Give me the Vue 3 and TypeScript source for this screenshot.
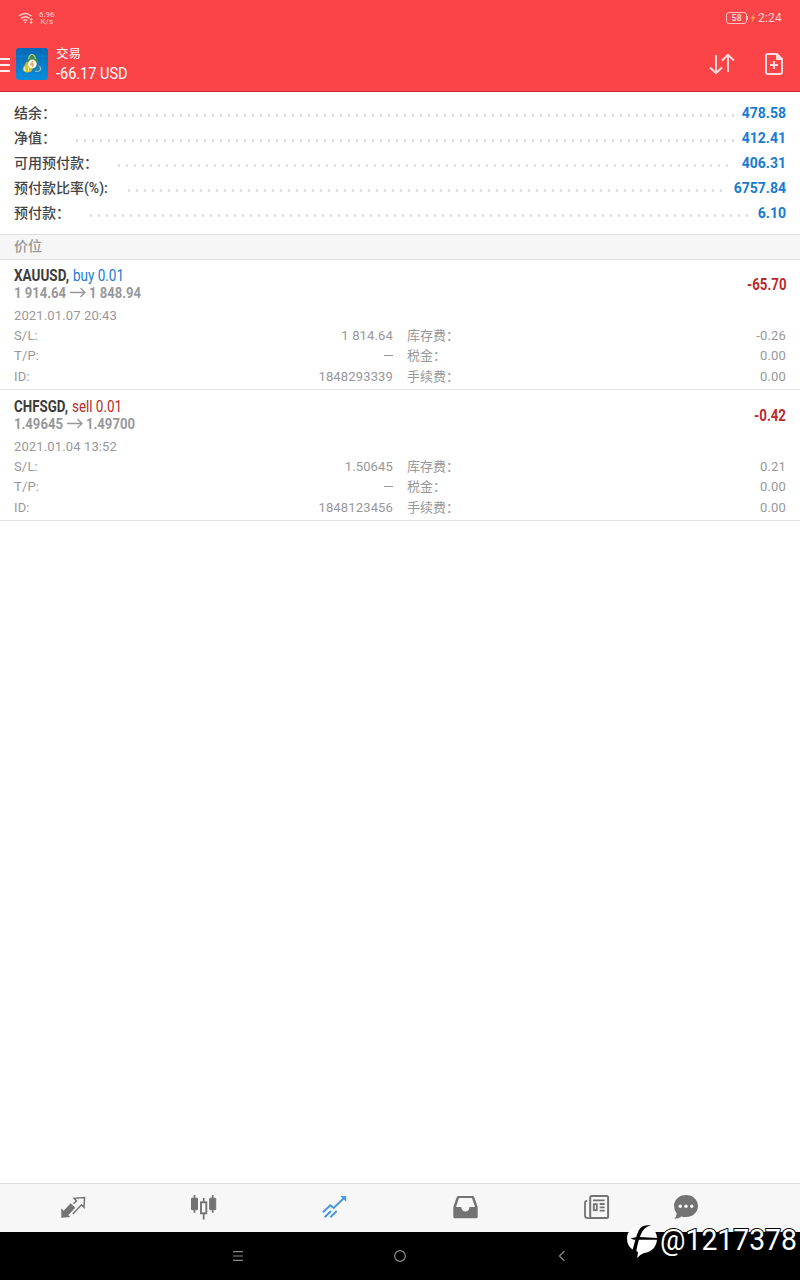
<script setup lang="ts">
interface Summary { label: string; value: string; start: number; dots: number }
interface Order {
  symbol: string; symbolW: number; side: string; sideW: number; action: 'buy' | 'sell'
  from: string; fromW: number; to: string; toW: number; profit: string; profitW: number
  time: string; sl: string; id: string; swap: string
}
const summary: Summary[] = [
  { label: '结余：', value: '478.58', start: 58.5, dots: 83 },
  { label: '净值：', value: '412.41', start: 58.5, dots: 83 },
  { label: '可用预付款：', value: '406.31', start: 100.5, dots: 77 },
  { label: '预付款比率(%):', value: '6757.84', start: 111, dots: 75 },
  { label: '预付款：', value: '6.10', start: 72.5, dots: 83 },
]
const orders: Order[] = [
  { symbol: 'XAUUSD,', symbolW: 55, side: 'buy 0.01', sideW: 51, action: 'buy', from: '1 914.64', fromW: 52, to: '1 848.94', toW: 52, profit: '-65.70', profitW: 39.5, time: '2021.01.07 20:43', sl: '1 814.64', id: '1848293339', swap: '-0.26' },
  { symbol: 'CHFSGD,', symbolW: 54, side: 'sell 0.01', sideW: 50, action: 'sell', from: '1.49645', fromW: 49, to: '1.49700', toW: 49, profit: '-0.42', profitW: 32, time: '2021.01.04 13:52', sl: '1.50645', id: '1848123456', swap: '0.21' },
]
</script>

<template>
  <div class="screen">
    <header class="top">
      <div class="status">
        <svg class="wifi" width="16" height="14" viewBox="0 0 16 14" fill="none" stroke="#ffc9c9" stroke-width="1.4">
          <path d="M1 5Q7 0 13.5 5M3 7.5Q7.2 4 11.5 7.5M5 9.8Q7.2 8 9.3 9.8" />
          <circle cx="7.2" cy="11.3" r=".9" fill="#ffc9c9" stroke="none" />
          <path d="M13.2 7.5v4.8M12 9l1.2-1.5L14.4 9M12 11l1.2 1.5 1.2-1.5" stroke-width="1" />
        </svg>
        <div class="speed"><span>6.96</span><span>K/s</span></div>
        <div class="spacer"></div>
        <div class="battery">58</div>
        <svg class="bolt" width="6" height="12" viewBox="0 0 6 12"><path d="M4.500 .5.5 6.500h2L1.300 11.500 5.500 5H3.500z" fill="#ff9350" /></svg>
        <span class="clock">2:24</span>
      </div>
      <div class="bar">
        <svg class="menu" width="10" height="16" viewBox="0 0 10 16"><path d="M0 2h10M0 8h10M0 14h10" stroke="#ffecec" stroke-width="2.200" /></svg>
        <svg class="logo" width="32" height="32" viewBox="0 0 32 32">
          <defs><linearGradient id="sky" x2="0" y2="1"><stop stop-color="#0868b6" /><stop offset="1" stop-color="#078ddd" /></linearGradient></defs>
          <rect width="32" height="32" rx="3" fill="url(#sky)" />
          <path d="M0 8h32M0 27h32M5 0v32M27 0v32" stroke="#1996db" stroke-width=".6" opacity=".5" />
          <path d="M10 15c0-3 2-4 2.500-6C13.500 5 19 5 20 9c.5 2 2.500 3 2.500 6l-6 2z" fill="#3f8d4c" />
          <path d="M12.500 11q1-4.500 3.500-4.500t3.500 4.500" stroke="#a9d488" stroke-width="1.200" fill="none" />
          <path d="M11.500 14c-2 0-2 2.500-3.500 4-3 4 0 6.500 3.500 6.500 3 0 4.500-1 5-3.500z" fill="#cdbb3b" />
          <path d="M9.500 18.500q-2 3 .5 4.500M12.500 19v4.500" stroke="#f7ef9a" stroke-width="1.200" fill="none" />
          <path d="M21 14c2 0 2 2.500 3.500 4 3 4 .5 6-2.500 6.500-3 .3-5-1-5.500-3.500z" fill="#237fa8" />
          <path d="M23.500 18q2.500 3.500-.5 5l-4 .5" stroke="#7fcbe6" stroke-width="1.200" fill="none" />
          <circle cx="16.300" cy="16" r="4.400" fill="#f7f4e7" />
          <path d="m16.800 13-2 3.700h3m-1-1.700v4" stroke="#d9a06a" stroke-width="1.100" fill="none" />
        </svg>
        <div class="title">
          <span>交易</span>
          <svg width="74" height="20"><text x="0" y="16" textLength="71.500" lengthAdjust="spacingAndGlyphs" class="amount">-66.17 USD</text></svg>
        </div>
        <div class="spacer"></div>
        <svg class="sort" width="26" height="24" viewBox="0 0 26 24" fill="none" stroke="#ffdcdc" stroke-width="1.9">
          <path d="M7 3v18M1 15.5 7 21.2l6-5.7M19 20V2.800M13 8.500l6-5.700 6 5.700" />
        </svg>
        <svg class="doc" width="20" height="24" viewBox="0 0 20 24" fill="none" stroke="#ffdcdc" stroke-width="2">
          <path d="M3.500 2h9.500l5 5v13q0 2-2 2H4q-2 0-2-2V3.500Q2 2 3.500 2z" />
          <path d="M12.500 2v5.500H18z" fill="#ffdcdc" stroke-width="1" />
          <path d="M6 13h8M10 9v8" />
        </svg>
      </div>
    </header>

    <section class="summary">
      <div v-for="s in summary" :key="s.label" class="sum-row">
        <span class="sum-label" :style="{ width: s.start + 'px' }">{{ s.label }}</span>
        <span class="leader" :style="{ width: s.dots * 8 + 'px' }"></span>
        <span class="sum-value">{{ s.value }}</span>
      </div>
    </section>

    <div class="section">价位</div>

    <article v-for="o in orders" :key="o.id" class="order">
      <div class="head">
        <div class="names">
          <div class="line">
            <svg :width="o.symbolW" height="17"><text y="14" :textLength="o.symbolW" lengthAdjust="spacingAndGlyphs" class="symbol">{{ o.symbol }}</text></svg>
            <svg :width="o.sideW" height="17"><text y="14" :textLength="o.sideW" lengthAdjust="spacingAndGlyphs" :class="['side', o.action]">{{ o.side }}</text></svg>
          </div>
          <div class="line">
            <svg :width="o.fromW" height="17"><text y="14" :textLength="o.fromW" lengthAdjust="spacingAndGlyphs" class="price">{{ o.from }}</text></svg>
            <svg width="16" height="17" viewBox="0 0 16 17" fill="none" stroke="#98989a" stroke-width="1.3"><path d="M0 8.500h15M10.500 4l4.500 4.500-4.500 4.500" /></svg>
            <svg :width="o.toW" height="17"><text y="14" :textLength="o.toW" lengthAdjust="spacingAndGlyphs" class="price">{{ o.to }}</text></svg>
          </div>
        </div>
        <svg :width="o.profitW" height="20"><text y="16" :textLength="o.profitW" lengthAdjust="spacingAndGlyphs" class="profit">{{ o.profit }}</text></svg>
      </div>
      <div class="time">{{ o.time }}</div>
      <div class="details">
        <div>S/L:</div><div class="num">{{ o.sl }}</div><div class="fee">库存费：</div><div class="num">{{ o.swap }}</div>
        <div>T/P:</div><div class="num"><i class="dash"></i></div><div class="fee">税金：</div><div class="num">0.00</div>
        <div>ID:</div><div class="num">{{ o.id }}</div><div class="fee">手续费：</div><div class="num">0.00</div>
      </div>
    </article>

    <div class="spacer"></div>

    <nav class="tabs">
      <svg viewBox="0 0 28 28">
        <path d="M2.300 24.700v-9.400l2.400 2.400 7-7.400 4.600 4.400-7 7.300 2 2z" fill="#737373" />
        <path d="m14.500 10.700 3-2.700-2.300-2.700L25.600 4.500 25 14.300l-2.500-2.500-8.700 9.200" fill="none" stroke="#737373" stroke-width="1.500" />
      </svg>
      <svg viewBox="0 0 28 28" fill="#737373" stroke="#737373">
        <rect x="1.500" y="5.200" width="6" height="11.500" rx=".5" /><path d="M4.500 2v17.700M13.700 5v4M13.700 20.500v6M22.700 2v17.700" stroke-width="1.700" />
        <rect x="11" y="9.300" width="5.300" height="11" fill="none" stroke-width="1.900" /><rect x="19.700" y="5.200" width="6" height="11.500" rx=".5" />
      </svg>
      <svg class="third" viewBox="0 0 28 28" fill="none" stroke="#4998e2" stroke-width="2">
        <path d="m3 19.300 7.300-7 3.400 2.700L24.700 4.300M4.700 24.300 11 18M10.300 24.300l6.400-6.300" /><path d="M20.300 3h5.900v5.800z" fill="#4998e2" stroke="none" />
      </svg>
      <svg viewBox="0 0 28 28">
        <path fill="#737373" fill-rule="evenodd" d="M7.500 3h14q1.300 0 1.800 1.200l3.400 9.800v10q0 1.300-1.500 1.300H3.800q-1.500 0-1.500-1.300V14L5.700 4.200Q6.200 3 7.500 3zM8 5 5 14h5.300a4.100 4.500 0 0 0 8.200 0H24L21 5z" />
      </svg>
      <svg viewBox="0 0 28 28" fill="none" stroke="#737373" stroke-width="2">
        <rect x="8.200" y="2.900" width="17.900" height="22.200" rx="1.500" /><path d="M5.300 7.800Q3 7.800 3 10v12.500q0 2.600 3 2.600h4M11 7.300h11.700M17.700 11h5M17.700 14.300h5M17.700 17.600h5" stroke-width="1.800" /><rect x="11.800" y="11.200" width="3" height="6" stroke-width="1.800" />
      </svg>
      <svg class="chat" viewBox="0 0 28 28">
        <path fill="#737373" d="M14 2c6.800 0 12 4.800 12 11s-5.200 11-12 11q-2.500 0-4.500-.6-3 2.400-7.200 2.300Q4.500 24 4.700 20.500 2 17.500 2 13C2 6.800 7.200 2 14 2z" />
        <g fill="#f7f7f7"><circle cx="8.300" cy="13.200" r="1.700" /><circle cx="14" cy="13.200" r="1.700" /><circle cx="19.700" cy="13.200" r="1.700" /></g>
      </svg>
    </nav>

    <footer class="system">
      <svg viewBox="0 0 14 14"><path d="M2 2.700h10M2 7h10M2 11.300h10" /></svg>
      <svg viewBox="0 0 14 14"><circle cx="7" cy="7" r="5.300" /></svg>
      <svg viewBox="0 0 14 14"><path d="M9.500 2 4.500 7l5 5" /></svg>
    </footer>

    <svg class="watermark" width="180" height="46" viewBox="0 0 180 46">
      <path d="M21.500 7C13 7 7 13 7 20.500c0 5 2 8.500 5.500 11L18 34l-.8 6Q20 36.500 24 35c8-1 13-6.500 13-14.500C37 12.500 30.500 7 21.500 7z" fill="#fff" />
      <path d="M31 7.500c-5-.8-9.500 0-12 4.500-3 5.500-4 12-6.500 20l3.500 5c.5-8 2.500-15 5-21 1.700-4.500 5-7.500 10-8.500z" fill="#000" />
      <path d="M10.500 20.500q4-1.800 9-1.600L37 20v1.700H14z" fill="#000" />
      <text x="40" y="32" textLength="137" lengthAdjust="spacingAndGlyphs">@1217378</text>
    </svg>
  </div>
</template>

<style>
body { margin: 0; background: #fff; }
</style>

<style scoped>
.screen { position: relative; display: flex; flex-direction: column; width: 800px; height: 1280px; overflow: hidden; background: #fff; font-family: Roboto, "Noto Sans CJK SC", sans-serif; }
svg { display: block; flex: none; overflow: visible; }
.spacer { flex: 1; }
.top { box-sizing: border-box; height: 92px; background: #fa4447; border-bottom: 1px solid #c02c2f; }
.status { display: flex; align-items: center; height: 36px; padding: 0 18px; color: #ffd0d0; }
.speed { display: flex; flex-direction: column; align-items: center; margin-left: 5px; font-size: 8px; line-height: 7.500px; }
.battery { box-sizing: border-box; position: relative; width: 21px; height: 12px; border: 1px solid #ffc1c1; border-radius: 3px; font-size: 9px; font-weight: 700; line-height: 10px; text-align: center; }
.battery::after { content: ""; position: absolute; right: -2px; top: 3px; width: 1px; height: 4px; background: #ffc1c1; }
.bolt { margin: 0 2px 0 3px; }
.clock { font-size: 12px; letter-spacing: .2px; }
.bar { display: flex; align-items: center; height: 56px; padding-right: 16px; }
.menu { margin: 1px 6px 0 0; }
.title { display: flex; flex-direction: column; margin-left: 8px; color: #fff; font-size: 12.500px; line-height: 18px; }
.amount { font-size: 16px; fill: #fff; }
.sort { margin-right: 29px; }
.summary { box-sizing: border-box; height: 142px; padding: 9px 14px 0; }
.sum-row { display: flex; height: 25px; font-size: 14px; font-weight: 500; color: #444; line-height: 24px; white-space: nowrap; }
.leader { height: 25px; background: radial-gradient(circle at 4px 14.500px, #e0e0e0 0 1.100px, transparent 1.700px) 0 0 / 8px 25px repeat-x; }
.sum-value { margin-left: auto; color: #187bd1; font-size: 14px; font-weight: 700; line-height: 24px; }
.section { box-sizing: border-box; height: 26px; padding-left: 14px; border: solid #dfdfdf; border-width: 1px 0; background: #f6f6f6; color: #98989a; font-size: 14px; font-weight: 500; line-height: 22px; }
.order { box-sizing: border-box; height: 130px; padding: 6px 14px 0; border-bottom: 1px solid #e2e2e2; color: #98989a; }
.order + .order { height: 131px; padding-top: 7px; }
.head { display: flex; justify-content: space-between; align-items: center; height: 35px; }
.line { display: flex; gap: 3.500px; height: 17px; }
.symbol { font-size: 16px; font-weight: 700; fill: #3c3c3c; }
.side { font-size: 16px; }
.side.buy { fill: #187bd1; }
.side.sell { fill: #b92b2b; }
.price { font-size: 15px; font-weight: 700; fill: #98989a; }
.profit { font-size: 16px; font-weight: 700; fill: #b92b2b; }
.time { height: 25px; font-size: 13px; letter-spacing: .13px; line-height: 29px; }
.details { display: grid; grid-template-columns: 100px 279px 100px 1fr; grid-auto-rows: 20.300px; font-size: 13px; letter-spacing: .15px; line-height: 20px; }
.fee { padding-left: 14px; letter-spacing: 0; white-space: nowrap; }
.num { text-align: right; }
.dash { display: inline-block; width: 9px; height: 1px; background: #98989a; vertical-align: 4px; }
.tabs { box-sizing: border-box; display: flex; gap: 103px; height: 49px; padding: 9px 0 0 59px; border-top: 1px solid #dfdfdf; background: #f7f7f7; }
.tabs svg { width: 28px; height: 28px; }
.tabs .third { margin-left: -1px; }
.tabs .chat { margin-left: -41px; }
.system { display: flex; align-items: center; justify-content: center; gap: 148px; height: 48px; background: #000; }
.system svg { width: 14px; height: 14px; fill: none; stroke: #8c8c8c; stroke-width: 1.200; }
.watermark { position: absolute; left: 620px; top: 1218px; }
.watermark text { font: 400 29px Roboto, sans-serif; fill: #fff; stroke: #000; stroke-width: 2px; paint-order: stroke; }
</style>
